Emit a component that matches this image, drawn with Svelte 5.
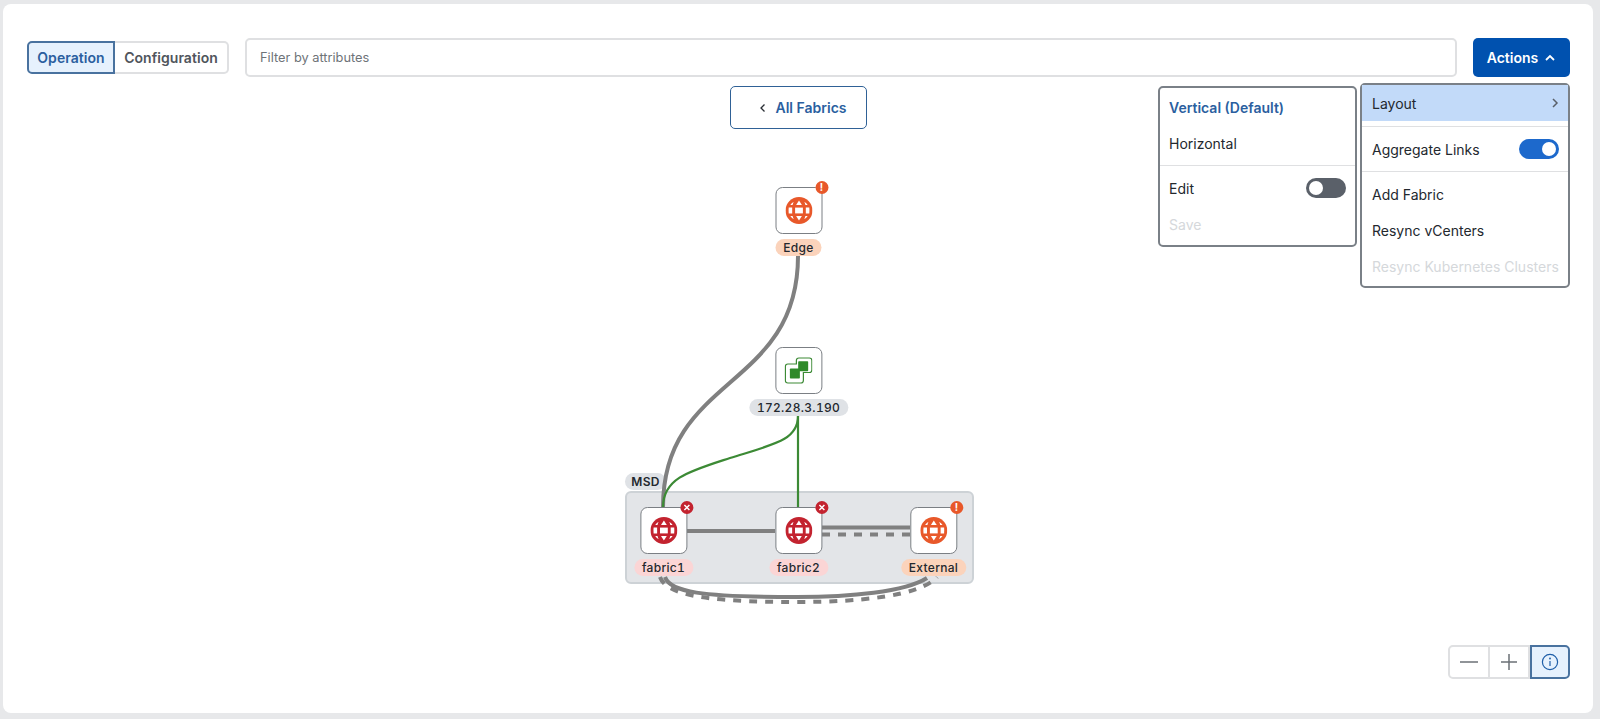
<script>
  const nodes = [
    { name: "Edge", cx: 771.5, top: 110, kind: "warn", icon: "globe" },
    { name: "172.28.3.190", cx: 771.5, top: 270, kind: "plain", icon: "vcenter" },
    { name: "fabric1", cx: 636.5, top: 430, kind: "error", icon: "globe" },
    { name: "fabric2", cx: 771.5, top: 430, kind: "error", icon: "globe" },
    { name: "External", cx: 906.5, top: 430, kind: "warn", icon: "globe" },
  ];
</script>

<div class="page">
  <main class="card">
    <header class="toolbar">
      <div class="segmented">
        <button class="seg active">Operation</button>
        <button class="seg">Configuration</button>
      </div>
      <div class="filter">Filter by attributes</div>
      <button class="actions">
        Actions
        <svg width="12" height="12" viewBox="0 0 12 12"><path d="M2 8l4-4 4 4" fill="none" stroke="#fff" stroke-width="1.8" /></svg>
      </button>
    </header>

    <section class="stage">
      <div class="group"></div>
      <span class="group-label">MSD</span>

      <svg class="edges" viewBox="27 77 1543 612" preserveAspectRatio="xMinYMin">
        <g fill="none" stroke="#808080" stroke-width="4">
          <path d="M798 256C798 390 663 375 663 507" />
          <path d="M687 531H775" />
          <path d="M822 527.5H910" />
          <path d="M822 534.5H910" stroke-dasharray="8 8" />
          <path d="M665 577C670 592 700 597 797 597C850 597 905 592 927 578" />
          <path d="M660 577C666 594 700 602 797 602C860 602 920 596 937 577" stroke-dasharray="8 8" />
        </g>
        <g fill="none" stroke="#3c8a35" stroke-width="2.2">
          <path d="M798 416V507" />
          <path d="M798 416C798 440 775 444 730 458C690 471 663 478 663 507" />
        </g>
      </svg>

      {#each nodes as node}
        <div class="node {node.kind}" style="left: {node.cx}px; top: {node.top}px">
          <div class="box">
            {#if node.icon === "globe"}
              <svg class="icon" width="27" height="27" viewBox="0 0 27 27">
                <circle cx="13.5" cy="13.5" r="13.5" fill="currentColor" />
                <g fill="#fff">
                  <rect x="9.6" y="10.6" width="7.8" height="5.8" />
                  <path d="M3.2 10.6H6.7V16.4H3.2Q2.9 13.5 3.2 10.6Z" />
                  <path d="M23.8 10.6H20.3V16.4H23.8Q24.1 13.5 23.8 10.6Z" />
                  <path d="M13.5 3.6L10.6 7.9H16.4Z" />
                  <path d="M13.5 23.4L10.6 19.1H16.4Z" />
                  <path d="M8.2 4.8Q6 6 4.8 7.9H7.1Q7.5 6.300 8.2 4.8Z" />
                  <path d="M18.8 4.8Q21 6 22.2 7.9H19.9Q19.5 6.300 18.8 4.8Z" />
                  <path d="M8.2 22.2Q6 21 4.8 19.1H7.1Q7.5 20.700 8.2 22.2Z" />
                  <path d="M18.8 22.2Q21 21 22.2 19.1H19.9Q19.5 20.700 18.8 22.2Z" />
                </g>
              </svg>
            {:else}
              <svg width="28" height="27" viewBox="0 0 28 27">
                <path d="M1 9.500Q1 7 3.500 7H12V3.500Q12 1 14.500 1H25Q27.500 1 27.500 3.500V13Q27.500 15.500 25 15.500H19V23.500Q19 26 16.500 26H3.500Q1 26 1 23.500Z" fill="#fff" stroke="#3c8a35" stroke-width="1.2" />
                <rect x="13.800" y="4.200" width="10" height="10" rx="0.800" fill="#2f8a2a" />
                <rect x="5.500" y="11.500" width="10" height="10" rx="0.800" fill="#2f8a2a" />
              </svg>
            {/if}
            {#if node.kind === "warn"}
              <span class="badge">!</span>
            {:else if node.kind === "error"}
              <span class="badge">
                <svg width="7" height="7" viewBox="0 0 7 7"><path d="M1 1l5 5M6 1l-5 5" stroke="#fff" stroke-width="1.500" /></svg>
              </span>
            {/if}
          </div>
          <span class="label">{node.name}</span>
        </div>
      {/each}

      <button class="back">
        <svg width="8" height="10" viewBox="0 0 8 10"><path d="M5.500 1.500L2 5l3.500 3.500" fill="none" stroke="#2a2f35" stroke-width="1.300" /></svg>
        All Fabrics
      </button>

      <div class="menu layout-menu">
        <div class="row selected">Vertical (Default)</div>
        <div class="row">Horizontal</div>
        <hr />
        <div class="row">Edit <span class="toggle"></span></div>
        <div class="row disabled">Save</div>
      </div>

      <div class="menu actions-menu">
        <div class="row highlighted">
          Layout
          <svg width="8" height="12" viewBox="0 0 8 12"><path d="M2 2l4 4-4 4" fill="none" stroke="#5a6069" stroke-width="1.500" /></svg>
        </div>
        <hr class="first" />
        <div class="row">Aggregate Links <span class="toggle on"></span></div>
        <hr />
        <div class="row">Add Fabric</div>
        <div class="row">Resync vCenters</div>
        <div class="row disabled">Resync Kubernetes Clusters</div>
      </div>

      <div class="zoom">
        <button aria-label="Zoom out"><svg width="20" height="20" viewBox="0 0 20 20"><path d="M1 10H19" stroke="#6b7076" stroke-width="1.500" /></svg></button>
        <button aria-label="Zoom in"><svg width="18" height="18" viewBox="0 0 18 18"><path d="M1 9H17M9 1V17" stroke="#6b7076" stroke-width="1.500" /></svg></button>
        <button class="info" aria-label="Info">
          <svg width="18" height="18" viewBox="0 0 18 18" fill="none" stroke="#1f5ea8" stroke-width="1.200">
            <circle cx="9" cy="9" r="7.600" />
            <path d="M9 8V13" />
            <circle cx="9" cy="5.500" r="0.400" />
          </svg>
        </button>
      </div>
    </section>
  </main>
</div>

<style>
  :global(body) {
    margin: 0;
    background: #e7e8ea;
  }

  .page {
    height: 719px;
    box-sizing: border-box;
    padding: 4px 7px 6px 3px;
    font-family: Inter, "Liberation Sans", sans-serif;
    color: #23282e;
    font-size: 14px;
  }

  .card {
    height: 100%;
    box-sizing: border-box;
    background: #fff;
    border-radius: 8px;
    padding: 34px 23px 24px 24px;
    display: flex;
    flex-direction: column;
    overflow: hidden;
  }

  button {
    font: inherit;
    cursor: pointer;
  }

  .toolbar {
    display: flex;
    align-items: center;
    gap: 16px;
    height: 39px;
    flex: none;
  }

  .segmented {
    display: flex;
    height: 33px;
  }

  .seg {
    border: 2px solid #dfe0e2;
    border-left: 0;
    background: #fff;
    color: #50555c;
    font-weight: 600;
    font-size: 14px;
    padding: 0;
    border-radius: 0 5px 5px 0;
    width: 114px;
    white-space: nowrap;
    letter-spacing: 0.05px;
  }

  .seg.active {
    border: 2px solid #49729f;
    background: #e6f1fd;
    color: #2b5f9f;
    border-radius: 5px 0 0 5px;
    width: 88px;
  }

  .filter {
    flex: 1;
    height: 100%;
    box-sizing: border-box;
    border: 2px solid #dfe0e2;
    border-radius: 5px;
    padding-left: 13px;
    display: flex;
    align-items: center;
    font-size: 12.8px;
    color: #6e7378;
  }

  .actions {
    width: 97px;
    height: 100%;
    border: 0;
    border-radius: 5px;
    background: #0051af;
    color: #fff;
    font-weight: 600;
    font-size: 14px;
    display: flex;
    align-items: center;
    justify-content: center;
    gap: 6px;
  }

  .stage {
    flex: 1;
    position: relative;
    display: flex;
    flex-direction: column;
    align-items: center;
  }

  .edges {
    position: absolute;
    left: 0;
    top: 0;
    width: 1543px;
    height: 612px;
  }

  .back {
    position: relative;
    margin-top: 9px;
    width: 137px;
    height: 43px;
    box-sizing: border-box;
    padding: 0 0 0 8px;
    border: 1.5px solid #2f6196;
    border-radius: 5px;
    background: #fff;
    color: #2b5f9f;
    font-weight: 600;
    font-size: 14px;
    display: flex;
    align-items: center;
    justify-content: center;
    gap: 9px;
  }

  .group {
    position: absolute;
    left: 598px;
    top: 414px;
    width: 349px;
    height: 93px;
    box-sizing: border-box;
    background: #e3e5e8;
    border: 2px solid #cdd2d6;
    border-radius: 6px;
  }

  .group-label {
    position: absolute;
    left: 598px;
    top: 396px;
    width: 41px;
    height: 17px;
    border-radius: 9px;
    background: #dfe2e6;
    font-size: 12px;
    font-weight: 600;
    line-height: 17px;
    text-align: center;
    letter-spacing: 0.3px;
  }

  .node {
    position: absolute;
    transform: translateX(-50%);
    display: flex;
    flex-direction: column;
    align-items: center;
    gap: 5px;
    white-space: nowrap;
  }

  .box {
    position: relative;
    width: 47px;
    height: 47px;
    box-sizing: border-box;
    background: #fff;
    border: 1px solid #7b7f84;
    border-radius: 7px;
    display: flex;
    align-items: center;
    justify-content: center;
  }

  .label {
    height: 17px;
    line-height: 17px;
    padding: 0 8px;
    border-radius: 9px;
    background: #dfe2e6;
    font-size: 12px;
    font-weight: 500;
    letter-spacing: 0.3px;
    font-variant-numeric: tabular-nums;
  }

  .badge {
    position: absolute;
    right: -7px;
    top: -7px;
    width: 13px;
    height: 13px;
    border-radius: 50%;
    color: #fff;
    font-size: 10px;
    font-weight: 700;
    line-height: 13px;
    display: flex;
    align-items: center;
    justify-content: center;
  }

  .warn .icon {
    color: #e8582a;
  }

  .warn .badge {
    background: #e8582a;
  }

  .warn .label {
    background: #fbd3bb;
  }

  .error .icon {
    color: #c3232f;
  }

  .error .badge {
    background: #c3232f;
  }

  .error .label {
    background: #fbd5d5;
  }

  .menu {
    position: absolute;
    box-sizing: border-box;
    background: #fff;
    border: 2px solid #7a8087;
    border-radius: 5px;
  }

  .layout-menu {
    top: 9px;
    right: 213px;
    width: 199px;
    height: 161px;
    padding-top: 1px;
  }

  .actions-menu {
    top: 6px;
    right: 0;
    width: 210px;
    height: 205px;
  }

  .row {
    height: 36px;
    padding: 0 9px 0 10px;
    display: flex;
    align-items: center;
    justify-content: space-between;
    white-space: nowrap;
  }

  .layout-menu .row {
    padding-left: 9px;
  }

  .row.selected {
    color: #2b5f9f;
    font-weight: 600;
  }

  .row.highlighted {
    background: #c2daf9;
  }

  .row.disabled {
    color: #d5d8db;
  }

  hr {
    margin: 4px 0;
    border: 0;
    border-top: 1px solid #dfe0e2;
  }

  hr.first {
    margin-top: 5px;
  }

  .toggle {
    position: relative;
    width: 40px;
    height: 20px;
    border-radius: 10px;
    background: #5a6069;
  }

  .toggle::after {
    content: "";
    position: absolute;
    left: 3px;
    top: 3px;
    width: 14px;
    height: 14px;
    border-radius: 50%;
    background: #fff;
  }

  .toggle.on {
    background: #1d69cc;
  }

  .toggle.on::after {
    left: 23px;
  }

  .zoom {
    position: relative;
    margin-top: auto;
    margin-bottom: 10px;
    align-self: flex-end;
    display: flex;
    height: 34px;
  }

  .zoom button {
    width: 40px;
    border: 2px solid #dfe0e2;
    border-left-width: 0;
    background: #fff;
    padding: 0;
    display: flex;
    align-items: center;
    justify-content: center;
  }

  .zoom button:first-child {
    border-left-width: 2px;
    border-radius: 5px 0 0 5px;
    width: 42px;
  }

  .zoom .info {
    border: 2px solid #49729f;
    background: #e6f1fd;
    border-radius: 0 5px 5px 0;
  }
</style>
